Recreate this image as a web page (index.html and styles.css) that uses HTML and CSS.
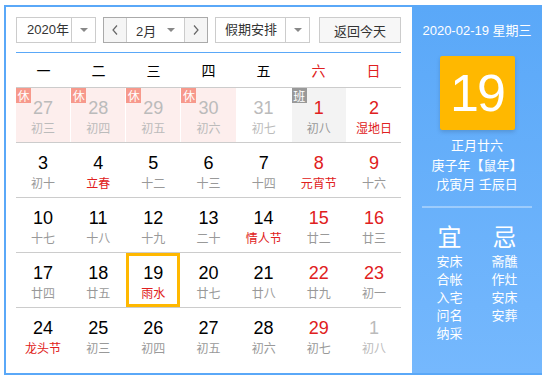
FILE: index.html
```html
<!DOCTYPE html>
<html>
<head>
    <meta charset="utf-8">
    <title>万年历</title>
    <link rel="stylesheet" href="styles.css">
</head>
<body>
    <div class="calendar">
        <div class="main">
            <div class="toolbar">
                <div class="select year">
                    <span class="select-text">2020年</span>
                    <span class="select-arrow"><i class="tri"></i></span>
                </div>
                <div class="month-group">
                    <span class="nav">
                        <svg width="6" height="10" viewBox="0 0 6 10"><polyline points="5,0.5 1,5 5,9.5" fill="none" stroke="#666" stroke-width="1.2"/></svg>
                    </span>
                    <div class="month-select">
                        <span class="month-text">2月</span>
                        <i class="tri"></i>
                    </div>
                    <span class="nav">
                        <svg width="6" height="10" viewBox="0 0 6 10"><polyline points="1,0.5 5,5 1,9.5" fill="none" stroke="#666" stroke-width="1.2"/></svg>
                    </span>
                </div>
                <div class="select holiday">
                    <span class="select-text">假期安排</span>
                    <span class="select-arrow"><i class="tri"></i></span>
                </div>
                <button class="today-btn">返回今天</button>
            </div>

            <div class="weekdays">
                <span>一</span><span>二</span><span>三</span><span>四</span><span>五</span>
                <span class="weekend">六</span><span class="weekend">日</span>
            </div>

            <div class="days">
                <div class="week">
                    <div class="day other rest"><i class="tag">休</i><b>27</b><small>初三</small></div>
                    <div class="day other rest"><i class="tag">休</i><b>28</b><small>初四</small></div>
                    <div class="day other rest"><i class="tag">休</i><b>29</b><small>初五</small></div>
                    <div class="day other rest"><i class="tag">休</i><b>30</b><small>初六</small></div>
                    <div class="day other"><b>31</b><small>初七</small></div>
                    <div class="day red work"><i class="tag">班</i><b>1</b><small>初八</small></div>
                    <div class="day red"><b>2</b><small class="fest">湿地日</small></div>
                </div>
                <div class="week">
                    <div class="day"><b>3</b><small>初十</small></div>
                    <div class="day"><b>4</b><small class="fest">立春</small></div>
                    <div class="day"><b>5</b><small>十二</small></div>
                    <div class="day"><b>6</b><small>十三</small></div>
                    <div class="day"><b>7</b><small>十四</small></div>
                    <div class="day red"><b>8</b><small class="fest">元宵节</small></div>
                    <div class="day red"><b>9</b><small>十六</small></div>
                </div>
                <div class="week">
                    <div class="day"><b>10</b><small>十七</small></div>
                    <div class="day"><b>11</b><small>十八</small></div>
                    <div class="day"><b>12</b><small>十九</small></div>
                    <div class="day"><b>13</b><small>二十</small></div>
                    <div class="day"><b>14</b><small class="fest">情人节</small></div>
                    <div class="day red"><b>15</b><small>廿二</small></div>
                    <div class="day red"><b>16</b><small>廿三</small></div>
                </div>
                <div class="week">
                    <div class="day"><b>17</b><small>廿四</small></div>
                    <div class="day"><b>18</b><small>廿五</small></div>
                    <div class="day today"><b>19</b><small class="fest">雨水</small></div>
                    <div class="day"><b>20</b><small>廿七</small></div>
                    <div class="day"><b>21</b><small>廿八</small></div>
                    <div class="day red"><b>22</b><small>廿九</small></div>
                    <div class="day red"><b>23</b><small>初一</small></div>
                </div>
                <div class="week">
                    <div class="day"><b>24</b><small class="fest">龙头节</small></div>
                    <div class="day"><b>25</b><small>初三</small></div>
                    <div class="day"><b>26</b><small>初四</small></div>
                    <div class="day"><b>27</b><small>初五</small></div>
                    <div class="day"><b>28</b><small>初六</small></div>
                    <div class="day red"><b>29</b><small>初七</small></div>
                    <div class="day other"><b>1</b><small>初八</small></div>
                </div>
            </div>
        </div>

        <div class="side">
            <div class="side-date">2020-02-19 星期三</div>
            <div class="big-day">19</div>
            <div class="lunar">
                <p>正月廿六</p>
                <p>庚子年【鼠年】</p>
                <p>戊寅月 壬辰日</p>
            </div>
            <div class="side-line"></div>
            <div class="advice">
                <div class="advice-col">
                    <h3>宜</h3>
                    <p>安床</p><p>合帐</p><p>入宅</p><p>问名</p><p>纳采</p>
                </div>
                <div class="advice-col">
                    <h3>忌</h3>
                    <p>斋醮</p><p>作灶</p><p>安床</p><p>安葬</p>
                </div>
            </div>
        </div>
    </div>
</body>
</html>
```

FILE: styles.css
```css
body {
    margin: 0;
    background: #fff;
    font-family: "Liberation Sans", "Noto Sans CJK SC", sans-serif;
}

.calendar {
    margin: 5px 0 0 4px;
    width: 538px;
    height: 370px;
    box-sizing: border-box;
    border: 2px solid #5aa8f8;
    border-right: none;
    display: flex;
}

/* 左侧日历 */
.main {
    width: 406px;
    padding: 10px 11px 0 10px;
    box-sizing: border-box;
}

.toolbar {
    display: flex;
    height: 26px;
    font-size: 13px;
    color: #333;
}

.select {
    display: flex;
    height: 26px;
    box-sizing: border-box;
    border: 1px solid #ccc;
    background: #fff;
}

.select-text {
    flex: 1;
    line-height: 24px;
    padding-left: 10px;
}

.select-arrow {
    width: 23px;
    border-left: 1px solid #ccc;
    display: flex;
    align-items: center;
    justify-content: center;
}

.tri {
    width: 0;
    height: 0;
    border-left: 4px solid transparent;
    border-right: 4px solid transparent;
    border-top: 4px solid #888;
}

.year {
    width: 80px;
}

.holiday {
    width: 95px;
    margin-left: 7px;
}

.holiday .select-text {
    padding-left: 9px;
}

.month-group {
    display: flex;
    width: 105px;
    height: 26px;
    margin-left: 7px;
    box-sizing: border-box;
    border: 1px solid #aaa;
}

.nav {
    width: 22px;
    background: #f5f5f5;
    display: flex;
    align-items: center;
    justify-content: center;
}

.month-select {
    flex: 1;
    display: flex;
    align-items: center;
    border-left: 1px solid #ccc;
    border-right: 1px solid #ccc;
    background: #fff;
}

.month-text {
    flex: 1;
    padding-left: 9px;
}

.month-select .tri {
    margin-right: 9px;
}

.today-btn {
    margin-left: 9px;
    width: 82px;
    height: 26px;
    padding: 0;
    border: 1px solid #ccc;
    background: #f7f7f7;
    font: 13px "Liberation Sans", "Noto Sans CJK SC", sans-serif;
    color: #333;
}

.weekdays {
    margin-top: 9px;
    border-top: 1px solid #5aa8f8;
    border-bottom: 1px solid #ccc;
    height: 34px;
    display: grid;
    grid-template-columns: repeat(7, 1fr);
    align-items: center;
    text-align: center;
    font-size: 14px;
    font-family: "Noto Sans CJK SC", sans-serif;
    color: #000;
}

.weekdays .weekend {
    color: #e02020;
}

.week {
    display: grid;
    grid-template-columns: repeat(7, 1fr);
    column-gap: 1px;
    height: 55px;
    box-sizing: border-box;
    border-bottom: 1px solid #ccc;
}

.week:last-child {
    border-bottom: none;
}

.day {
    position: relative;
    text-align: center;
    padding-top: 10px;
    box-sizing: border-box;
}

.day b {
    display: block;
    font-weight: normal;
    font-size: 18px;
    line-height: 21px;
    color: #000;
}

.day small {
    display: block;
    font-size: 12px;
    line-height: 18px;
    color: #999;
    font-family: "Noto Sans CJK SC", sans-serif;
}

.day.red b,
.day small.fest {
    color: #e02020;
}

.day.other b,
.day.other small {
    color: #bbb;
}

.day.rest {
    background: #fdeeed;
}

.day.work {
    background: #f3f3f3;
}

.tag {
    position: absolute;
    top: 0;
    left: 0;
    width: 15px;
    height: 15px;
    font-style: normal;
    font-size: 12px;
    line-height: 15px;
    color: #fff;
    background: #f7998c;
    font-family: "Noto Sans CJK SC", sans-serif;
}

.work .tag {
    background: #999;
}

.day.today {
    border: 3px solid #ffb800;
    padding-top: 7px;
}

/* 右侧面板 */
.side {
    width: 130px;
    background: linear-gradient(#5aa8f8, #75b8fd);
    color: #fff;
    text-align: center;
    font-size: 13px;
    font-family: "Liberation Sans", "Noto Sans CJK SC", sans-serif;
}

.side-date {
    margin-top: 15px;
    line-height: 18px;
}

.big-day {
    width: 75px;
    height: 74px;
    margin: 16px auto 0;
    background: #ffb800;
    border-radius: 2px;
    box-shadow: 0 2px 4px rgba(0, 0, 0, 0.15);
    font-size: 52px;
    letter-spacing: -2px;
    line-height: 74px;
}

.lunar {
    margin-top: 6px;
}

.lunar p {
    margin: 0;
    line-height: 19.5px;
}

.side-line {
    margin: 11px 10px 0;
    height: 2px;
    background: rgba(255, 255, 255, 0.35);
}

.advice {
    display: flex;
    justify-content: center;
    gap: 9px;
    margin-top: 14px;
}

.advice-col {
    width: 46px;
}

.advice-col h3 {
    margin: 0 0 3px;
    font-size: 24px;
    line-height: 28px;
    font-weight: normal;
    font-family: "Noto Sans CJK SC", sans-serif;
}

.advice-col p {
    margin: 0;
    line-height: 18px;
}
```
